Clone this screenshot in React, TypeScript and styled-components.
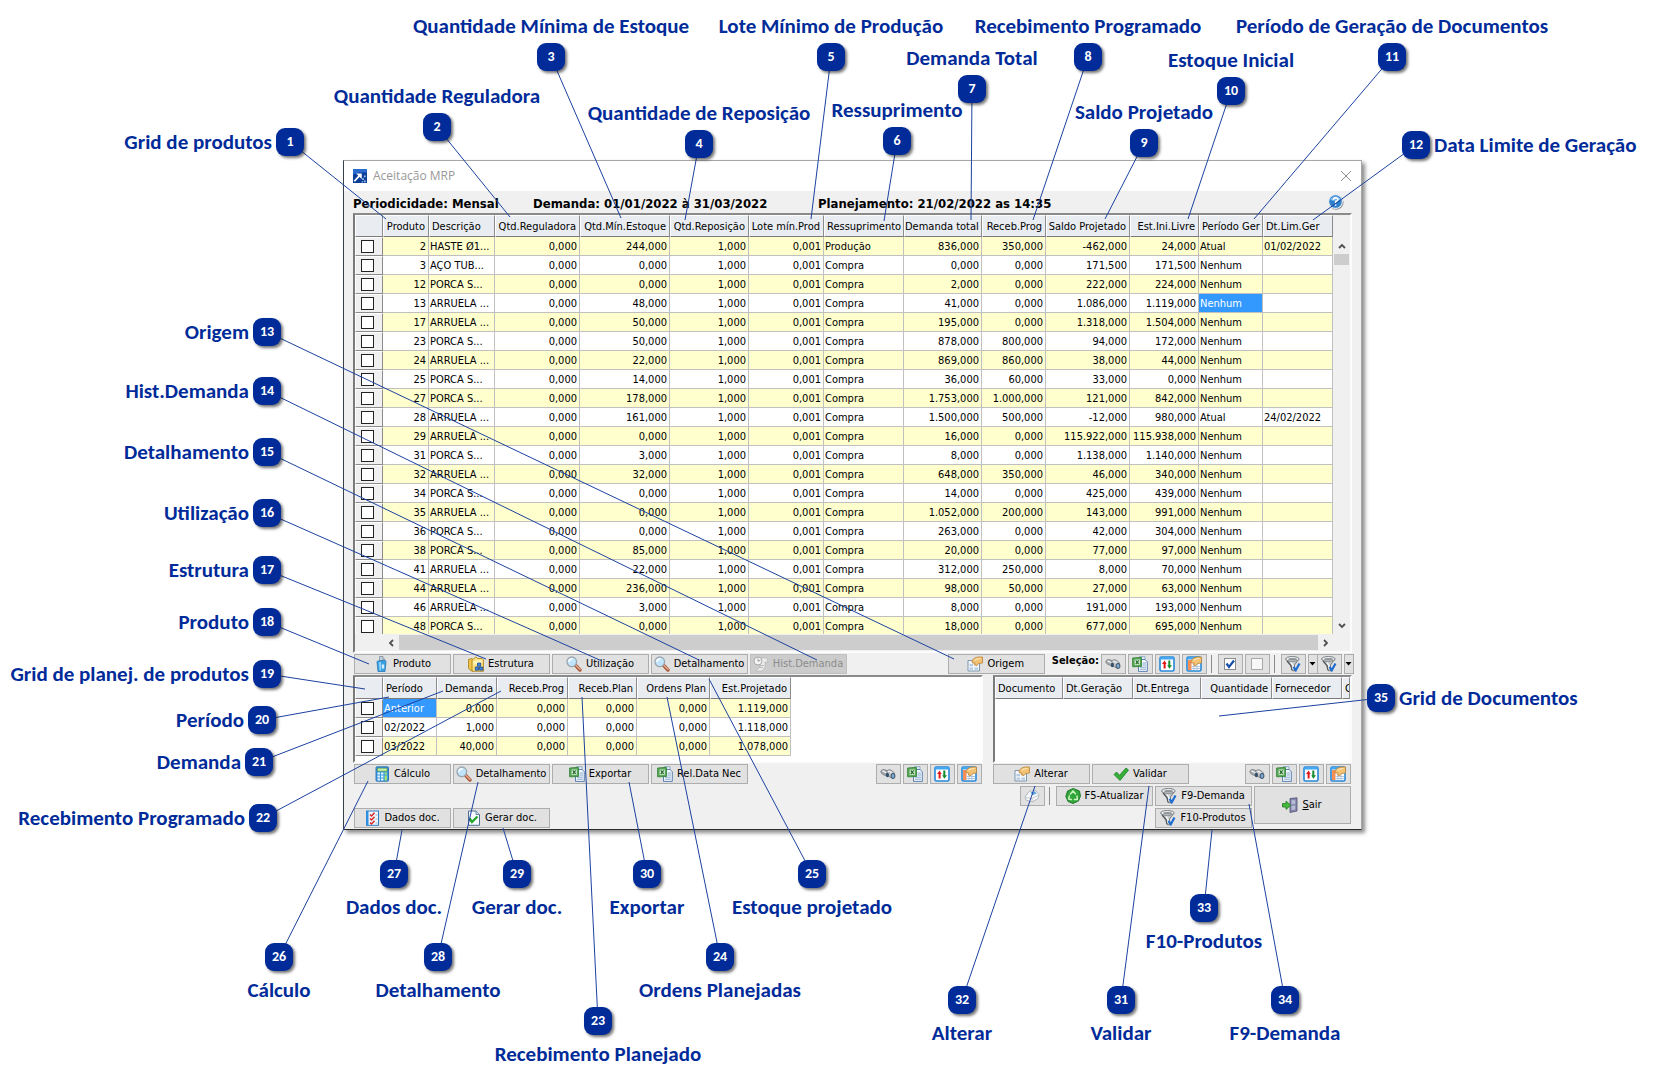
import React from 'react';
import styled, { createGlobalStyle, css } from 'styled-components';

const UI_FONT = "'DejaVu Sans Condensed', Tahoma, 'Open Sans', sans-serif";
const CALLOUT_FONT = "Calibri, Carlito, Lato, sans-serif";
const NAVY = '#002b99';

const GlobalStyle = createGlobalStyle`
  *, *::before, *::after { box-sizing: border-box; }
  body { margin: 0; background: #fff; font-family: ${UI_FONT}; font-size: 11px; color: #000; }
`;

/* ---------- page ---------- */

const Figure = styled.main`
  position: relative;
  min-height: 100vh;
  min-width: 1300px;
  padding: 160px 291px 252px 343px;
`;

const Leaders = styled.svg`
  position: absolute;
  inset: 0;
  width: 100%;
  height: 100%;
  pointer-events: none;
`;

type Side = 'top' | 'bottom' | 'left' | 'right';

const pinLayout = {
  top: { direction: 'column-reverse', gap: 4 },
  bottom: { direction: 'column', gap: 6 },
  left: { direction: 'row-reverse', gap: 4 },
  right: { direction: 'row', gap: 4 },
};

const Pin = styled.div<{ $side: Side }>`
  position: absolute;
  width: 28px;
  height: 28px;
  display: flex;
  flex-direction: ${p => pinLayout[p.$side].direction};
  align-items: center;
  justify-content: flex-start;
  gap: ${p => pinLayout[p.$side].gap}px;
  pointer-events: none;
`;

const PinBadge = styled.span`
  flex: none;
  width: 28px;
  height: 28px;
  border-radius: 9px;
  background: ${NAVY};
  box-shadow: 2px 2px 3px rgba(0, 0, 0, 0.55);
  color: #fff;
  font: 700 14px/28px ${CALLOUT_FONT};
  text-align: center;
`;

const PinLabel = styled.span`
  flex: none;
  color: ${NAVY};
  font: 700 21px/26px ${CALLOUT_FONT};
  white-space: nowrap;
`;

/* ---------- window ---------- */

const Window = styled.section`
  border: 1px solid #a6a6a6;
  border-left-color: #39424a;
  border-bottom-color: #2b2b2b;
  background: #f0f0f0;
  box-shadow: 3px 3px 4px rgba(0, 0, 0, 0.45);
`;

const TitleBar = styled.header`
  display: flex;
  align-items: center;
  gap: 6px;
  height: 30px;
  padding: 0 9px;
  background: #fff;
`;

const Title = styled.h1`
  flex: 1;
  margin: 0;
  color: #999;
  font: 400 12px/16px 'Open Sans', 'Noto Sans', sans-serif;
`;

const CloseButton = styled.button`
  display: flex;
  padding: 0;
  border: 0;
  background: none;
`;

const Content = styled.div`
  display: flex;
  flex-direction: column;
  padding: 0 9px 1px;
`;

const InfoBar = styled.div`
  display: flex;
  align-items: center;
  height: 22px;
  padding-top: 4px;
  font-weight: 700;
  font-size: 13px;
  line-height: 16px;
  white-space: nowrap;
`;

const InfoItem = styled.span<{ $width: number }>`
  width: ${p => p.$width}px;
`;

const HelpButton = styled.button`
  display: flex;
  margin-left: auto;
  margin-right: 8px;
  padding: 0 0 6px;
  border: 0;
  background: none;
`;

const Sunken = styled.div`
  border: 2px solid;
  border-color: #8a8a8a #fcfcfc #fcfcfc #7a7a7a;
  background: #fff;
  overflow: hidden;
`;

const MainGrid = styled(Sunken)`
  height: 440px;
  display: grid;
  grid-template: minmax(0, 1fr) 17px / minmax(0, 1fr) 17px;
  background: #f0f0f0;
`;

const Viewport = styled.div`
  min-width: 0;
  overflow: hidden;
`;

const Table = styled.table<{ $full?: boolean }>`
  width: ${p => (p.$full ? '100%' : 'auto')};
  table-layout: fixed;
  border-collapse: separate;
  border-spacing: 0;
  background: #fff;
`;

const Th = styled.th<{ $right?: boolean }>`
  height: 22px;
  padding: ${p => (p.$right ? '1px 3px 0 0' : '1px 0 0 2px')};
  border: 1px solid;
  border-color: #fff #8c8c8c #7b7b7b #fff;
  background: #e9edf1;
  font-weight: 400;
  font-size: 11px;
  line-height: 14px;
  text-align: ${p => (p.$right ? 'right' : 'left')};
  white-space: nowrap;
  overflow: hidden;
`;

const Row = styled.tr`
  background: #fff;
  &:nth-child(odd) { background: #ffffce; }
`;

const Td = styled.td<{ $right?: boolean; $selected?: boolean }>`
  height: 19px;
  padding: 1px 2px 0 1px;
  border: solid #c0c0c0;
  border-width: 0 1px 1px 0;
  font-size: 11px;
  line-height: 14px;
  text-align: ${p => (p.$right ? 'right' : 'left')};
  white-space: nowrap;
  overflow: hidden;
  ${p => p.$selected && css`background: #3399ff; color: #fff;`}
`;

const CheckCell = styled.td`
  height: 19px;
  padding: 0 3px 0 0;
  border: 1px solid;
  border-color: #fff #8c8c8c #8c8c8c #fff;
  background: #f0f0f0;
  line-height: 0;
  text-align: center;
`;

const CheckBox = styled.input.attrs({ type: 'checkbox' })`
  appearance: none;
  width: 13px;
  height: 13px;
  margin: 0;
  border: 1px solid #222;
  background: #fff;
`;

const VScroll = styled.div`
  display: flex;
  flex-direction: column;
  align-items: center;
  padding: 27px 1px 4px;
`;

const VThumb = styled.div`
  width: 15px;
  height: 11px;
  margin: 4px 0 auto;
  background: #cdcdcd;
`;

const HScroll = styled.div`
  display: flex;
  align-items: center;
  gap: 4px;
  padding: 1px 3px 1px 32px;
`;

const HThumb = styled.div`
  flex: 1;
  height: 15px;
  background: #cdcdcd;
`;

const Toolbar = styled.div`
  display: flex;
  align-items: center;
  gap: 2px;
  height: 20px;
  margin: 1px;
`;

const Button = styled.button<{ $tall?: boolean }>`
  flex: none;
  display: flex;
  align-items: center;
  justify-content: center;
  gap: 4px;
  width: 97px;
  height: ${p => (p.$tall ? 38 : 20)}px;
  padding: 0 1px 0 0;
  border: 1px solid #adadad;
  background: #e1e1e1;
  color: #000;
  font: 400 11px/14px ${UI_FONT};
  white-space: nowrap;
  &:disabled { background: #ccc; border-color: #bfbfbf; color: #8b8b8b; }
`;

const IconButton = styled(Button)`
  width: 25px;
`;

const DropButton = styled(Button)`
  width: 10px;
  margin-right: -3px;
`;

const Spacer = styled.div`
  flex: 1;
`;

const Divider = styled.div`
  flex: none;
  width: 1px;
  height: 18px;
  margin: 0 4px 0 2px;
  background: #8c8c8c;
`;

const SelectionLabel = styled.span`
  align-self: flex-start;
  padding: 0 0 0 5px;
  font: 700 11px/14px ${UI_FONT};
`;

const Lower = styled.div`
  display: grid;
  grid-template-columns: minmax(0, 630fr) minmax(0, 359fr);
  column-gap: 10px;
`;

const Pane = styled(Sunken)`
  height: 88px;
`;

const DocBar = styled(Toolbar)`
  margin-left: 0;
`;

const Footer = styled.footer`
  display: flex;
  align-items: flex-end;
  gap: 2px;
  height: 42px;
  margin: 1px 1px 0;
`;

const FooterGroup = styled.div`
  display: flex;
  align-items: center;
  align-self: flex-start;
  gap: 2px;
`;

const Stack = styled.div`
  display: flex;
  flex-direction: column;
  gap: 2px;
`;

/* ---------- icons ---------- */

const IconSvg = styled.svg`
  flex: none;
  display: block;
`;

const Icon = ({ children, size = 16 }: { children: React.ReactNode; size?: number }) => (
  <IconSvg width={size} height={size} viewBox="0 0 16 16" aria-hidden="true">{children}</IconSvg>
);

const Hand = () => (
  <>
    <path d="M5 4.500Q7.500 1.300 11 1H15.500V7L11.500 7.500L10 9.500L7.500 9L8 7H5.500Z" fill="#f3c374" stroke="#b98036" strokeWidth=".8" />
    <path d="M7.500 4.300Q9.500 2.300 13.500 2.500" fill="none" stroke="#fde6b8" strokeWidth="1.200" />
  </>
);

const BottleIcon = () => (
  <Icon>
    <path d="M6.500 .5h3.500v4h-3.500z" fill="#c3d1da" stroke="#71838e" strokeWidth=".7" />
    <path d="M10 2.500h2v1.500h-2z" fill="#8fa0aa" />
    <path d="M4.500 5L12.500 4.500L13 6L12 15.500H5L4 6Z" fill="#3aa1e3" stroke="#1d6fb0" strokeWidth=".7" />
    <path d="M5.800 6.200L8 6L8 14.500L6.500 14.500Z" fill="#8ed0f7" />
    <path d="M8.800 8.500h2.400v4h-2.400z" fill="#d9effc" />
  </Icon>
);

const StructureIcon = () => (
  <Icon>
    <path d="M.5 3.500L4 2.500L5.500 4V15L2.500 14.500L.5 12Z" fill="#f0c54b" stroke="#a87b12" strokeWidth=".8" />
    <path d="M4 4L8 .8L9.500 2.500H14L15.500 4V15.300H4Z" fill="#f9df7e" stroke="#a87b12" strokeWidth=".8" />
    <path d="M5.500 5L14 4V6.500L5.500 9Z" fill="#fff4b8" />
    <path d="M9.500 7h3.200v3.200h-3.200zM7.300 11h3.200v3.200h-3.200zM11.600 11h3.200v3.200h-3.200z" fill="#3f86e0" stroke="#123f8c" strokeWidth=".7" />
  </Icon>
);

const MagnifierIcon = () => (
  <Icon>
    <path d="M9.700 9.500L14 14" stroke="#a8573a" strokeWidth="3.400" strokeLinecap="round" />
    <path d="M10 9.500L14.200 13.500" stroke="#eab08e" strokeWidth="1.200" strokeLinecap="round" />
    <circle cx="5.800" cy="5.800" r="4.800" fill="#bfe4fb" stroke="#9aa6b0" strokeWidth="1.300" />
    <path d="M3 6A3 3 0 0 1 6.500 2.900" fill="none" stroke="#fff" strokeWidth="1.600" />
  </Icon>
);

const HistoryIcon = () => (
  <Icon>
    <path d="M8 2h6l1 4h-3v5l-3 4H3l4-4z" fill="#ececec" stroke="#b6b6b6" strokeWidth=".7" />
    <circle cx="5" cy="5" r="4" fill="#f6f6f6" stroke="#a9a9a9" />
    <path d="M5 2.500V5.300L7.300 4.300" fill="none" stroke="#999" />
    <path d="M6 11.500h4M7 9.500h4" stroke="#b0b0b0" strokeWidth=".8" />
  </Icon>
);

const FormHandIcon = () => (
  <Icon>
    <path d="M1 4.500h11.500v10.500h-11.500z" fill="#f3f6fa" stroke="#7d97b0" />
    <path d="M2.500 8h3.500v2.200H2.500zM2.500 11.500h3.500v2.200H2.500zM7.500 11.500h3.500v2.200H7.500z" fill="#b4cbe2" />
    <Hand />
  </Icon>
);

const BinocularsIcon = () => (
  <Icon>
    <path d="M.8 5Q2 3 4.500 3.500L9 5.500L8 10.500L3 8.500Q.3 7 .8 5Z" fill="#a4a9ad" stroke="#787d81" strokeWidth=".8" />
    <path d="M6.500 4.800Q8.500 3.200 11 4L14.700 7L12 12L8 10.200Z" fill="#c3c7ca" stroke="#787d81" strokeWidth=".8" />
    <path d="M2.500 4.900L6.500 6.700M8.300 5.200L11.700 6.500" stroke="#f3f4f5" strokeWidth="1.200" />
    <ellipse cx="7.400" cy="9" rx="1.600" ry="2.200" fill="#35506c" />
    <ellipse cx="13" cy="10" rx="2" ry="2.600" fill="#7ba6ca" stroke="#2e4660" strokeWidth=".9" />
  </Icon>
);

const ExcelIcon = () => (
  <Icon>
    <path d="M7.500 .7h5.500v10H7.500z" fill="#e6f0fa" stroke="#6f93bd" strokeWidth=".7" />
    <path d="M6.500 3.500h6.500l2.300 2.300V15.400H6.500z" fill="#f3f8fd" stroke="#4b74a8" strokeWidth=".9" />
    <path d="M10.500 7h3.500M10.500 9h3.500M8 11.200h6M8 13.200h6" stroke="#7ea3cc" strokeWidth=".9" />
    <path d="M.6 2L9.500 1.300V10.500L.6 10.800Z" fill="#58a858" stroke="#2f7d34" strokeWidth=".8" />
    <path d="M2.700 3.600h5v5.200h-5z" fill="#f1f8ef" />
    <path d="M3.700 4.300L6.700 8M6.700 4.300L3.700 8" stroke="#27702b" strokeWidth="1.300" />
  </Icon>
);

const SortIcon = () => (
  <Icon>
    <rect x="1" y="1" width="14" height="14" rx="1.500" fill="#fff" stroke="#2688d8" strokeWidth="1.600" />
    <path d="M1.200 1.500h13.600v2H1.200z" fill="#41a7f2" />
    <path d="M5.600 12.500V7" stroke="#e01515" strokeWidth="2" />
    <path d="M3 8L5.600 4.600L7.600 8Z" fill="#e01515" />
    <path d="M10.300 4.500V10" stroke="#128a2e" strokeWidth="2" />
    <path d="M8.300 9.300L10.300 12.800L13 9.300Z" fill="#128a2e" />
  </Icon>
);

const GridHandIcon = () => (
  <Icon>
    <rect x="1" y="1" width="14" height="14" rx="1.500" fill="#fff" stroke="#2688d8" strokeWidth="1.600" />
    <path d="M1.200 1.500h13.600v2H1.200z" fill="#41a7f2" />
    <path d="M2 4h3.500v10H2z" fill="#f58f55" />
    <path d="M5.500 10.500h8.500M5.500 12.500h8.500M8 9v5M11 8v6" stroke="#a9bfd6" strokeWidth=".9" />
    <Hand />
  </Icon>
);

const CheckedIcon = () => (
  <Icon>
    <rect x="2.500" y="2.500" width="11" height="11" fill="#fff" stroke="#8c8c8c" />
    <path d="M4.500 7.500L7 11L12 4.500" fill="none" stroke="#164fa8" strokeWidth="2.200" />
  </Icon>
);

const UncheckedIcon = () => (
  <Icon>
    <rect x="2.500" y="2.500" width="11" height="11" fill="#f7f7f7" stroke="#a8a8a8" />
  </Icon>
);

const FilterIcon = () => (
  <Icon>
    <path d="M.8 3L6 9.500L7 14.500L9.500 15V9L14 3Z" fill="#c5c8cb" stroke="#62676b" strokeWidth=".8" />
    <path d="M2 5L6 9.500L7 14" fill="none" stroke="#55595d" strokeWidth="1.300" />
    <path d="M6 6.500L8 9.500V13" fill="none" stroke="#f6f7f7" strokeWidth="1.400" />
    <ellipse cx="7.400" cy="2.900" rx="6.700" ry="2.400" fill="#eceeef" stroke="#73787c" strokeWidth=".9" />
    <ellipse cx="7.600" cy="3.200" rx="4.400" ry="1.200" fill="#8f9599" />
    <path d="M8.500 10.800L10.800 14.200L14.500 7.500" fill="none" stroke="#1f6cd0" strokeWidth="2.200" />
  </Icon>
);

const CalculatorIcon = () => (
  <Icon>
    <rect x="2" y=".8" width="12.500" height="14.400" rx="1" fill="#3b9de4" stroke="#1b62a6" strokeWidth=".8" />
    <path d="M3.500 2.200h9.500v3H3.500z" fill="#c8f0a8" stroke="#47861e" strokeWidth=".5" />
    <path d="M3.500 6.500h2.400v2H3.500zM7 6.500h2.400v2H7zM3.500 9.500h2.400v2H3.500zM7 9.500h2.400v2H7zM3.500 12.400h2.400v2H3.500zM7 12.400h2.400v2H7z" fill="#e7f5ff" />
    <path d="M10.600 6.500h2.400v2h-2.400zM10.600 9.500h2.400v4.900h-2.400z" fill="#9fe06a" />
  </Icon>
);

const ChecklistIcon = () => (
  <Icon>
    <rect x="2.500" y="1" width="12" height="14.300" fill="#eef6fd" stroke="#2f7fc4" />
    <path d="M2 1h2.500v14.300H2z" fill="#2f8fdc" />
    <path d="M6 4.500L7.500 6L10.500 2.800M6 8.500L7.500 10L10.500 6.800M6 12.500L7.500 14L10.500 10.800" fill="none" stroke="#d8201c" strokeWidth="1.400" />
    <path d="M11.500 5h2M11.500 9h2M11.500 13h2" stroke="#8faecb" strokeWidth=".9" />
  </Icon>
);

const PageCheckIcon = () => (
  <Icon>
    <path d="M3.500 1h7.500l3.500 3.500V15.300H3.500z" fill="#f7fbff" stroke="#4e6f94" />
    <path d="M11 1v3.500h3.500" fill="#cfe0f1" stroke="#4e6f94" strokeWidth=".8" />
    <path d="M4.500 8.500L7 12L12.500 6.500" fill="none" stroke="#23a52b" strokeWidth="2.400" />
  </Icon>
);

const CheckIcon = () => (
  <Icon>
    <path d="M1 8.500L3.500 6L6.500 9.300L13 2L15.500 4L7 14.500Z" fill="#36b038" stroke="#1c7c22" strokeWidth=".8" />
  </Icon>
);

const RefreshIcon = () => (
  <Icon>
    <path d="M8 .5L11 1.500L14.500 3L15.500 8L13.500 13L8 15.500L3 13.500L.8 8.500L2.500 3Z" fill="#2fa53a" stroke="#16691f" strokeWidth=".8" />
    <path d="M5 6.500L8 3L10.800 6.300M12 7.500L12.300 11.500H8.700M7 11.700L3.700 11L4.500 7.500" fill="none" stroke="#c9f5bf" strokeWidth="1.500" />
  </Icon>
);

const ExitIcon = () => (
  <Icon>
    <path d="M8 1.500L15 .8V14L8 15.500Z" fill="#8487ab" stroke="#4f5275" strokeWidth=".8" />
    <path d="M9.500 3.300L13.200 3V7L9.500 7.300ZM9.500 8.800L13.200 8.500V12.500L9.500 13Z" fill="#b9bcd6" />
    <path d="M.5 6.500H4V4L8.800 8.300L4 12.500V10H.5Z" fill="#46b83c" stroke="#1f7a20" strokeWidth=".8" />
  </Icon>
);

const EraserIcon = () => (
  <Icon>
    <path d="M1 9L5 3.500L11 2L15 6.500L14 10.500L8 14L2 12Z" fill="#f7f8fa" stroke="#aab1b8" strokeWidth=".9" />
    <path d="M1.500 9.500L8 10.500V14M8 10.500L14.500 7" fill="none" stroke="#bcc2c8" strokeWidth=".9" />
    <path d="M6.500 4.300L10.800 3.300L12.700 5.500L8.500 7.200Z" fill="#62a6de" />
  </Icon>
);

const HelpIcon = () => (
  <Icon size={17}>
    <circle cx="8.600" cy="8.700" r="7" fill="#8a8f96" />
    <circle cx="8" cy="8" r="7" fill="#e5ebf0" />
    <circle cx="8" cy="8" r="5.900" fill="#2c7fca" />
    <path d="M3 6.500A5.300 5.300 0 0 1 13 6.500Q8 8.500 3 6.500Z" fill="#7ab9ec" />
    <path d="M5.900 6.500Q6 4.400 8.100 4.400Q10.300 4.500 10.200 6.200Q10.100 7.300 8.100 8.200V9.300M8.100 10.500V12" fill="none" stroke="#fff" strokeWidth="1.400" />
  </Icon>
);

const AppIcon = () => (
  <Icon size={14}>
    <rect width="16" height="16" fill="#0d3f9a" />
    <path d="M0 0h16v4Q8 3 0 6z" fill="#2a6bd0" />
    <path d="M1.500 14L7.500 7.500" stroke="#fff" strokeWidth="2" />
    <path d="M3.500 5H10V11.500Z" fill="#fff" />
    <path d="M10.500 10.500h2v2h-2zM12.500 13h2v2h-2zM10 14h1.500v1.500H10zM12.500 7.500h2v2h-2z" fill="#9fc0ee" />
  </Icon>
);

const CloseIcon = () => (
  <IconSvg width="12" height="12" viewBox="0 0 12 12" aria-hidden="true">
    <path d="M1 1L11 11M11 1L1 11" stroke="#8d8d8d" strokeWidth="1" />
  </IconSvg>
);

const Chevron = ({ dir }: { dir: 'up' | 'down' | 'left' | 'right' }) => {
  const paths = {
    up: 'M1 6L4 3L7 6',
    down: 'M1 2L4 5L7 2',
    left: 'M6 1L3 4L6 7',
    right: 'M2 1L5 4L2 7',
  };
  return (
    <IconSvg width="8" height="8" viewBox="0 0 8 8" aria-hidden="true">
      <path d={paths[dir]} fill="none" stroke="#505050" strokeWidth="1.800" />
    </IconSvg>
  );
};

const DropArrow = () => (
  <IconSvg width="7" height="4" viewBox="0 0 7 4" aria-hidden="true">
    <path d="M.5 0H6.500L3.500 3.500Z" fill="#000" />
  </IconSvg>
);

/* ---------- data ---------- */

type Column = { label: string; width?: number; right?: boolean };

const productColumns: Column[] = [
  { label: 'Produto', width: 46, right: true },
  { label: 'Descrição', width: 66 },
  { label: 'Qtd.Reguladora', width: 85, right: true },
  { label: 'Qtd.Mín.Estoque', width: 90, right: true },
  { label: 'Qtd.Reposição', width: 79, right: true },
  { label: 'Lote mín.Prod', width: 75, right: true },
  { label: 'Ressuprimento', width: 80 },
  { label: 'Demanda total', width: 78, right: true },
  { label: 'Receb.Prog', width: 64, right: true },
  { label: 'Saldo Projetado', width: 84, right: true },
  { label: 'Est.Ini.Livre', width: 69, right: true },
  { label: 'Período Ger', width: 64 },
  { label: 'Dt.Lim.Ger' },
];

const A = 'ARRUELA ...';
const P = 'PORCA S...';

const products: string[][] = [
  ['2', 'HASTE Ø1...', '244,000', 'Produção', '836,000', '350,000', '-462,000', '24,000', 'Atual', '01/02/2022'],
  ['3', 'AÇO TUB...', '0,000', 'Compra', '0,000', '0,000', '171,500', '171,500', 'Nenhum', ''],
  ['12', P, '0,000', 'Compra', '2,000', '0,000', '222,000', '224,000', 'Nenhum', ''],
  ['13', A, '48,000', 'Compra', '41,000', '0,000', '1.086,000', '1.119,000', 'Nenhum', ''],
  ['17', A, '50,000', 'Compra', '195,000', '0,000', '1.318,000', '1.504,000', 'Nenhum', ''],
  ['23', P, '50,000', 'Compra', '878,000', '800,000', '94,000', '172,000', 'Nenhum', ''],
  ['24', A, '22,000', 'Compra', '869,000', '860,000', '38,000', '44,000', 'Nenhum', ''],
  ['25', P, '14,000', 'Compra', '36,000', '60,000', '33,000', '0,000', 'Nenhum', ''],
  ['27', P, '178,000', 'Compra', '1.753,000', '1.000,000', '121,000', '842,000', 'Nenhum', ''],
  ['28', A, '161,000', 'Compra', '1.500,000', '500,000', '-12,000', '980,000', 'Atual', '24/02/2022'],
  ['29', A, '0,000', 'Compra', '16,000', '0,000', '115.922,000', '115.938,000', 'Nenhum', ''],
  ['31', P, '3,000', 'Compra', '8,000', '0,000', '1.138,000', '1.140,000', 'Nenhum', ''],
  ['32', A, '32,000', 'Compra', '648,000', '350,000', '46,000', '340,000', 'Nenhum', ''],
  ['34', P, '0,000', 'Compra', '14,000', '0,000', '425,000', '439,000', 'Nenhum', ''],
  ['35', A, '0,000', 'Compra', '1.052,000', '200,000', '143,000', '991,000', 'Nenhum', ''],
  ['36', P, '0,000', 'Compra', '263,000', '0,000', '42,000', '304,000', 'Nenhum', ''],
  ['38', P, '85,000', 'Compra', '20,000', '0,000', '77,000', '97,000', 'Nenhum', ''],
  ['41', A, '22,000', 'Compra', '312,000', '250,000', '8,000', '70,000', 'Nenhum', ''],
  ['44', A, '236,000', 'Compra', '98,000', '50,000', '27,000', '63,000', 'Nenhum', ''],
  ['46', A, '3,000', 'Compra', '8,000', '0,000', '191,000', '193,000', 'Nenhum', ''],
  ['48', P, '0,000', 'Compra', '18,000', '0,000', '677,000', '695,000', 'Nenhum', ''],
].map(([id, name, min, ...rest]) => [id, name, '0,000', min, '1,000', '0,001', ...rest]);

const periodColumns: Column[] = [
  { label: 'Período', width: 54 },
  { label: 'Demanda', width: 60, right: true },
  { label: 'Receb.Prog', width: 71, right: true },
  { label: 'Receb.Plan', width: 69, right: true },
  { label: 'Ordens Plan', width: 73, right: true },
  { label: 'Est.Projetado', width: 81, right: true },
];

const periods: string[][] = [
  ['Anterior', '0,000', '0,000', '0,000', '0,000', '1.119,000'],
  ['02/2022', '1,000', '0,000', '0,000', '0,000', '1.118,000'],
  ['03/2022', '40,000', '0,000', '0,000', '0,000', '1.078,000'],
];

const documentColumns: Column[] = [
  { label: 'Documento', width: 68 },
  { label: 'Dt.Geração', width: 70 },
  { label: 'Dt.Entrega', width: 68 },
  { label: 'Quantidade', width: 71, right: true },
  { label: 'Fornecedor', width: 70 },
  { label: 'C' },
];

type Callout = { n: number; label: string; side: Side; x: number; y: number; to: [number, number] };

const callouts: Callout[] = [
  { n: 1, label: 'Grid de produtos', side: 'left', x: 276, y: 128, to: [386, 219] },
  { n: 2, label: 'Quantidade Reguladora', side: 'top', x: 423, y: 113, to: [510, 217] },
  { n: 3, label: 'Quantidade Mínima de Estoque', side: 'top', x: 537, y: 43, to: [621, 218] },
  { n: 4, label: 'Quantidade de Reposição', side: 'top', x: 685, y: 130, to: [685, 220] },
  { n: 5, label: 'Lote Mínimo de Produção', side: 'top', x: 817, y: 43, to: [811, 219] },
  { n: 6, label: 'Ressuprimento', side: 'top', x: 883, y: 127, to: [884, 221] },
  { n: 7, label: 'Demanda Total', side: 'top', x: 958, y: 75, to: [971, 220] },
  { n: 8, label: 'Recebimento Programado', side: 'top', x: 1074, y: 43, to: [1033, 220] },
  { n: 9, label: 'Saldo Projetado', side: 'top', x: 1130, y: 129, to: [1105, 219] },
  { n: 10, label: 'Estoque Inicial', side: 'top', x: 1217, y: 77, to: [1188, 219] },
  { n: 11, label: 'Período de Geração de Documentos', side: 'top', x: 1378, y: 43, to: [1254, 219] },
  { n: 12, label: 'Data Limite de Geração', side: 'right', x: 1402, y: 131, to: [1313, 220] },
  { n: 13, label: 'Origem', side: 'left', x: 253, y: 318, to: [954, 659] },
  { n: 14, label: 'Hist.Demanda', side: 'left', x: 253, y: 377, to: [817, 660] },
  { n: 15, label: 'Detalhamento', side: 'left', x: 253, y: 438, to: [699, 660] },
  { n: 16, label: 'Utilização', side: 'left', x: 253, y: 499, to: [602, 661] },
  { n: 17, label: 'Estrutura', side: 'left', x: 253, y: 556, to: [486, 659] },
  { n: 18, label: 'Produto', side: 'left', x: 253, y: 608, to: [369, 664] },
  { n: 19, label: 'Grid de planej. de produtos', side: 'left', x: 253, y: 660, to: [365, 689] },
  { n: 20, label: 'Período', side: 'left', x: 248, y: 706, to: [389, 697] },
  { n: 21, label: 'Demanda', side: 'left', x: 245, y: 748, to: [443, 691] },
  { n: 22, label: 'Recebimento Programado', side: 'left', x: 249, y: 804, to: [501, 691] },
  { n: 23, label: 'Recebimento Planejado', side: 'bottom', x: 584, y: 1007, to: [582, 697] },
  { n: 24, label: 'Ordens Planejadas', side: 'bottom', x: 706, y: 943, to: [667, 697] },
  { n: 25, label: 'Estoque projetado', side: 'bottom', x: 798, y: 860, to: [709, 679] },
  { n: 26, label: 'Cálculo', side: 'bottom', x: 265, y: 943, to: [368, 781] },
  { n: 27, label: 'Dados doc.', side: 'bottom', x: 380, y: 860, to: [402, 830] },
  { n: 28, label: 'Detalhamento', side: 'bottom', x: 424, y: 943, to: [478, 782] },
  { n: 29, label: 'Gerar doc.', side: 'bottom', x: 503, y: 860, to: [503, 828] },
  { n: 30, label: 'Exportar', side: 'bottom', x: 633, y: 860, to: [629, 782] },
  { n: 31, label: 'Validar', side: 'bottom', x: 1107, y: 986, to: [1149, 786] },
  { n: 32, label: 'Alterar', side: 'bottom', x: 948, y: 986, to: [1035, 786] },
  { n: 33, label: 'F10-Produtos', side: 'bottom', x: 1190, y: 894, to: [1212, 830] },
  { n: 34, label: 'F9-Demanda', side: 'bottom', x: 1271, y: 986, to: [1249, 804] },
  { n: 35, label: 'Grid de Documentos', side: 'right', x: 1367, y: 684, to: [1219, 716] },
];

/* ---------- parts ---------- */

type GridProps = {
  name: string;
  columns: Column[];
  rows?: string[][];
  checks?: boolean;
  full?: boolean;
  selected?: [number, number];
};

const DataGrid = ({ name, columns, rows = [], checks, full, selected }: GridProps) => {
  const fixed = columns.reduce((sum, c) => sum + (c.width ?? 0), checks ? 28 : 0);
  return (
    <Table $full={full} aria-label={name} style={full ? undefined : { width: fixed }}>
      <colgroup>
        {checks && <col width={28} />}
        {columns.map(c => <col key={c.label} width={c.width} />)}
      </colgroup>
      <thead>
        <tr>
          {checks && <Th aria-label="Marcar" />}
          {columns.map(c => <Th key={c.label} $right={c.right}>{c.label}</Th>)}
        </tr>
      </thead>
      <tbody>
        {rows.map((row, r) => (
          <Row key={row[0]}>
            {checks && <CheckCell><CheckBox aria-label={`Marcar ${row[0]}`} /></CheckCell>}
            {row.map((value, c) => (
              <Td key={columns[c].label} $right={columns[c].right} $selected={selected?.[0] === r && selected?.[1] === c}>
                {value}
              </Td>
            ))}
          </Row>
        ))}
      </tbody>
    </Table>
  );
};

const GridTools = () => (
  <>
    <IconButton aria-label="Localizar"><BinocularsIcon /></IconButton>
    <IconButton aria-label="Exportar para planilha"><ExcelIcon /></IconButton>
    <IconButton aria-label="Ordenar"><SortIcon /></IconButton>
    <IconButton aria-label="Configurar colunas"><GridHandIcon /></IconButton>
  </>
);

export default function App() {
  return (
    <Figure>
      <GlobalStyle />
      <Window>
        <TitleBar>
          <AppIcon />
          <Title>Aceitação MRP</Title>
          <CloseButton aria-label="Fechar"><CloseIcon /></CloseButton>
        </TitleBar>
        <Content>
          <InfoBar>
            <InfoItem $width={180}>Periodicidade: Mensal</InfoItem>
            <InfoItem $width={285}>Demanda: 01/01/2022 à 31/03/2022</InfoItem>
            <InfoItem $width={260}>Planejamento: 21/02/2022 as 14:35</InfoItem>
            <HelpButton aria-label="Ajuda"><HelpIcon /></HelpButton>
          </InfoBar>

          <MainGrid>
            <Viewport>
              <DataGrid name="Produtos" columns={productColumns} rows={products} checks full selected={[3, 11]} />
            </Viewport>
            <VScroll>
              <Chevron dir="up" />
              <VThumb />
              <Chevron dir="down" />
            </VScroll>
            <HScroll>
              <Chevron dir="left" />
              <HThumb />
              <Chevron dir="right" />
            </HScroll>
          </MainGrid>

          <Toolbar>
            <Button><BottleIcon />Produto</Button>
            <Button><StructureIcon />Estrutura</Button>
            <Button><MagnifierIcon />Utilização</Button>
            <Button><MagnifierIcon />Detalhamento</Button>
            <Button disabled><HistoryIcon />Hist.Demanda</Button>
            <Spacer />
            <Button><FormHandIcon />Origem</Button>
            <SelectionLabel>Seleção:</SelectionLabel>
            <GridTools />
            <Divider />
            <IconButton aria-label="Marcar todos"><CheckedIcon /></IconButton>
            <IconButton aria-label="Desmarcar todos"><UncheckedIcon /></IconButton>
            <Divider />
            <IconButton aria-label="Filtrar"><FilterIcon /></IconButton>
            <DropButton aria-label="Opções do filtro"><DropArrow /></DropButton>
            <IconButton aria-label="Filtrar seleção"><FilterIcon /></IconButton>
            <DropButton aria-label="Opções do filtro de seleção"><DropArrow /></DropButton>
          </Toolbar>

          <Lower>
            <Pane>
              <DataGrid name="Planejamento de produtos" columns={periodColumns} rows={periods} checks selected={[0, 0]} />
            </Pane>
            <Pane>
              <DataGrid name="Documentos" columns={documentColumns} full />
            </Pane>
            <Toolbar>
              <Button><CalculatorIcon />Cálculo</Button>
              <Button><MagnifierIcon />Detalhamento</Button>
              <Button><ExcelIcon />Exportar</Button>
              <Button><ExcelIcon />Rel.Data Nec</Button>
              <Spacer />
              <GridTools />
            </Toolbar>
            <DocBar>
              <Button><FormHandIcon />Alterar</Button>
              <Button><CheckIcon />Validar</Button>
              <Spacer />
              <GridTools />
            </DocBar>
          </Lower>

          <Footer>
            <Button><ChecklistIcon />Dados doc.</Button>
            <Button><PageCheckIcon />Gerar doc.</Button>
            <Spacer />
            <FooterGroup>
              <IconButton aria-label="Limpar"><EraserIcon /></IconButton>
              <Divider />
              <Button><RefreshIcon />F5-Atualizar</Button>
            </FooterGroup>
            <Stack>
              <Button><FilterIcon />F9-Demanda</Button>
              <Button><FilterIcon />F10-Produtos</Button>
            </Stack>
            <FooterGroup>
              <Button $tall><ExitIcon /><span><u>S</u>air</span></Button>
            </FooterGroup>
          </Footer>
        </Content>
      </Window>

      <Leaders aria-hidden="true">
        {callouts.map(c => (
          <line key={c.n} x1={c.x + 14} y1={c.y + 14} x2={c.to[0]} y2={c.to[1]} stroke="#1c429f" strokeWidth="1" />
        ))}
      </Leaders>
      {callouts.map(c => (
        <Pin key={c.n} $side={c.side} style={{ left: c.x, top: c.y }}>
          <PinBadge>{c.n}</PinBadge>
          <PinLabel>{c.label}</PinLabel>
        </Pin>
      ))}
    </Figure>
  );
}
